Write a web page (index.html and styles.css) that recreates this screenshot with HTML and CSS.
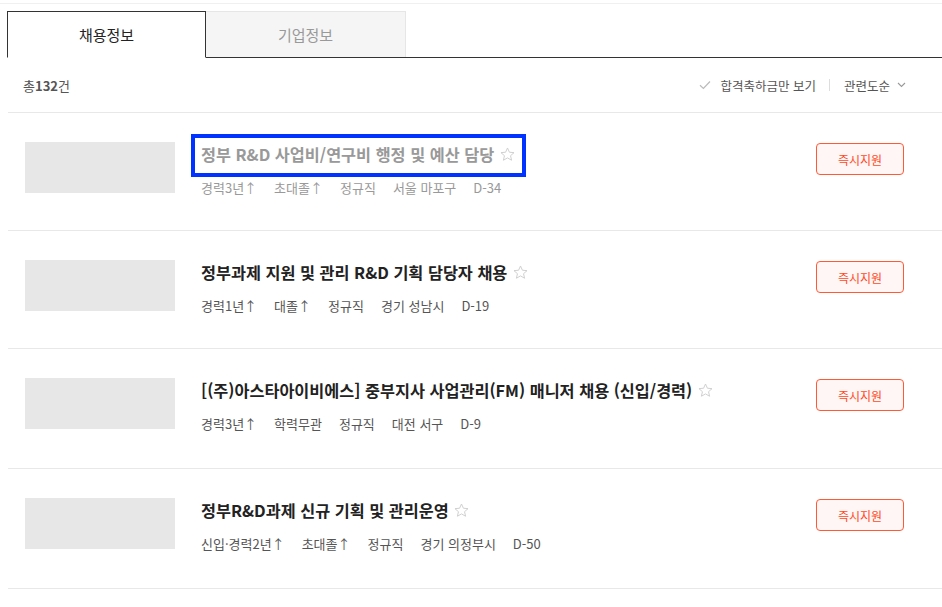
FILE: index.html
```html
<!DOCTYPE html>
<html lang="ko">
<head>
    <meta charset="UTF-8">
    <meta name="viewport" content="width=device-width, initial-scale=1.0">
    <title>채용정보</title>
    <link rel="stylesheet" href="styles.css">
</head>
<body>
    <div class="page">
        <div class="tabs">
            <div class="tab active">채용정보</div>
            <div class="tab">기업정보</div>
        </div>

        <div class="summary">
            <p class="count">총<b>132</b>건</p>
            <div class="options">
                <span class="filter">
                    <svg width="12" height="10" viewBox="0 0 12 10"><path d="M1 5.2l3.4 3.3L11 1.5" fill="none" stroke="#bbb" stroke-width="1.2"/></svg>
                    합격축하금만 보기
                </span>
                <span class="divider"></span>
                <span class="sort">
                    관련도순
                    <svg width="9" height="6" viewBox="0 0 9 6"><path d="M1 1l3.5 3.5L8 1" fill="none" stroke="#999" stroke-width="1.1"/></svg>
                </span>
            </div>
        </div>

        <ul class="jobs">
            <li class="job visited">
                <div class="thumb"></div>
                <div class="info">
                    <p class="title"><a class="focused" href="#">정부 R&amp;D 사업비/연구비 행정 및 예산 담당 <span class="star"><svg width="17" height="17" viewBox="0 0 24 24"><path d="M12 2.8l2.7 6 6.5.6-4.9 4.3 1.5 6.4L12 16.8l-5.8 3.3 1.5-6.4-4.9-4.3 6.5-.6z" fill="none" stroke="#ccc" stroke-width="1.3" stroke-linejoin="round"/></svg></span></a></p>
                    <p class="meta"><span>경력3년↑</span><span>초대졸↑</span><span>정규직</span><span>서울 마포구</span><span>D-34</span></p>
                </div>
                <button class="apply">즉시지원</button>
            </li>
            <li class="job">
                <div class="thumb"></div>
                <div class="info">
                    <p class="title"><a href="#">정부과제 지원 및 관리 R&amp;D 기획 담당자 채용 <span class="star"><svg width="17" height="17" viewBox="0 0 24 24"><path d="M12 2.8l2.7 6 6.5.6-4.9 4.3 1.5 6.4L12 16.8l-5.8 3.3 1.5-6.4-4.9-4.3 6.5-.6z" fill="none" stroke="#ccc" stroke-width="1.3" stroke-linejoin="round"/></svg></span></a></p>
                    <p class="meta"><span>경력1년↑</span><span>대졸↑</span><span>정규직</span><span>경기 성남시</span><span>D-19</span></p>
                </div>
                <button class="apply">즉시지원</button>
            </li>
            <li class="job">
                <div class="thumb"></div>
                <div class="info">
                    <p class="title"><a href="#">[(주)아스타아이비에스] 중부지사 사업관리(FM) 매니저 채용 (신입/경력) <span class="star"><svg width="17" height="17" viewBox="0 0 24 24"><path d="M12 2.8l2.7 6 6.5.6-4.9 4.3 1.5 6.4L12 16.8l-5.8 3.3 1.5-6.4-4.9-4.3 6.5-.6z" fill="none" stroke="#ccc" stroke-width="1.3" stroke-linejoin="round"/></svg></span></a></p>
                    <p class="meta"><span>경력3년↑</span><span>학력무관</span><span>정규직</span><span>대전 서구</span><span>D-9</span></p>
                </div>
                <button class="apply">즉시지원</button>
            </li>
            <li class="job">
                <div class="thumb"></div>
                <div class="info">
                    <p class="title"><a href="#">정부R&amp;D과제 신규 기획 및 관리운영 <span class="star"><svg width="17" height="17" viewBox="0 0 24 24"><path d="M12 2.8l2.7 6 6.5.6-4.9 4.3 1.5 6.4L12 16.8l-5.8 3.3 1.5-6.4-4.9-4.3 6.5-.6z" fill="none" stroke="#ccc" stroke-width="1.3" stroke-linejoin="round"/></svg></span></a></p>
                    <p class="meta"><span>신입·경력2년↑</span><span>초대졸↑</span><span>정규직</span><span>경기 의정부시</span><span>D-50</span></p>
                </div>
                <button class="apply">즉시지원</button>
            </li>
        </ul>
    </div>
</body>
</html>
```

FILE: styles.css
```css
body {
    font-family: "Noto Sans CJK KR", "Noto Sans", sans-serif;
    margin: 0;
    padding-top: 3px;
    background-color: #fff;
    color: #222;
}
.page {
    border-top: 1px solid #f0f0f0;
    padding: 7px 0 0 8px;
}
.tabs {
    display: flex;
    margin-left: -1px;
    border-bottom: 1px solid #333;
}
.tab {
    width: 199px;
    height: 45px;
    line-height: 45px;
    text-align: center;
    font-size: 15px;
    color: #999;
    background-color: #f5f5f5;
    border-top: 1px solid #e6e6e6;
    border-right: 1px solid #e6e6e6;
    box-sizing: content-box;
}
.tab.active {
    color: #222;
    background-color: #fff;
    border: 1px solid #333;
    border-bottom: 1px solid #fff;
    margin-bottom: -1px;
    width: 197px;
}
.summary {
    display: flex;
    justify-content: space-between;
    align-items: center;
    height: 54px;
    padding: 0 36px 0 15px;
    border-bottom: 1px solid #e8e8e8;
}
.count {
    margin: 0;
    font-size: 13px;
    color: #555;
}
.count b {
    font-weight: 700;
}
.options {
    display: flex;
    align-items: center;
    font-size: 12.5px;
    color: #555;
}
.filter, .sort {
    display: flex;
    align-items: center;
    gap: 7px;
}
.filter {
    gap: 9px;
}
.divider {
    width: 1px;
    height: 12px;
    background-color: #ddd;
    margin: 0 14px 0 13px;
}
.jobs {
    list-style: none;
    margin: 0;
    padding: 0;
}
.job {
    display: flex;
    align-items: flex-start;
    height: 88px;
    padding: 29px 38px 0 17px;
    border-bottom: 1px solid #e8e8e8;
}
.job:nth-child(n+3) {
    height: 90px;
}
.thumb {
    width: 150px;
    height: 51px;
    background-color: #e7e7e7;
    flex-shrink: 0;
    margin-right: 26px;
}
.info {
    flex: 1;
}
.title {
    margin: 0;
    font-size: 16.3px;
    font-weight: 700;
    line-height: 24px;
}
.title a {
    color: #222;
    text-decoration: none;
}
.title a.focused {
    display: inline-block;
    padding: 4px 6px 5px 6px;
    margin: -4px -6px -5px -6px;
    outline: 4px solid #0033ff;
}
.star {
    display: inline-block;
    vertical-align: -2px;
}
.meta {
    margin: 10px 0 0;
    font-size: 13px;
    line-height: 20px;
    color: #555;
    display: flex;
    gap: 17px;
}
.visited .title a,
.visited .meta {
    color: #999;
}
.apply {
    width: 88px;
    height: 32px;
    margin-top: 1px;
    flex-shrink: 0;
    background-color: #fff6f5;
    border: 1px solid #ff5a36;
    border-radius: 4px;
    color: #ff4a26;
    font-family: inherit;
    font-size: 12px;
    cursor: pointer;
}
```
